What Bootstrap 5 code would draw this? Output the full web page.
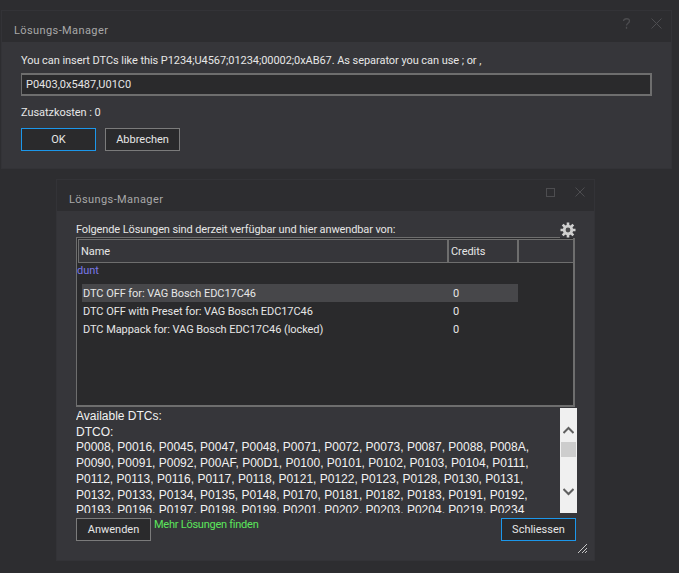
<!DOCTYPE html>
<html lang="de"><head><meta charset="utf-8"><title>Lösungs-Manager</title>
<link rel="stylesheet" href="https://cdn.jsdelivr.net/npm/bootstrap@5.3.0/dist/css/bootstrap.min.css">
<style>
html,body{height:100%}
body{background:#2d2d30;color:#e6e6e6;font:11px/16px Roboto,"Open Sans",sans-serif;letter-spacing:-.06px;overflow:hidden;margin:0}
.win{position:absolute;background:#36363a;outline:1px solid #333337}
.win-a{left:2px;top:11px;width:669px;height:157px}
.win-b{left:57px;top:180px;width:537px;height:380px}
.titlebar{height:31px;background:#2d2d30;color:#a8a8a8;letter-spacing:.4px;padding:12px 12px 0;position:relative}
.winctl{color:#4d4d50;position:absolute}
.ctl-q{left:620px;top:7px}
.ctl-xa{left:649px;top:7px}
.ctl-s{left:489px;top:8px}
.ctl-xb{left:518px;top:7px}
.body-a{padding:11px 19px 0}
.note{line-height:16px}
.inp.form-control{background:#2a2a2c;border:1px solid #6e6e6e;border-width:2px 2px 2px 1px;border-radius:0;color:#e6e6e6;font-size:11px;line-height:16px;height:23px;padding:1px 4px;margin-top:4px;box-shadow:none}
.cost{margin-top:9px;margin-bottom:7px}
.btnrow{gap:9px}
.wbtn.btn{width:75px;height:23px;padding:0;border-radius:0;border:1px solid #7b7b7b;background:#2a2a2c;color:#e6e6e6;font-size:11px;line-height:22px}
.wbtn.on{border-color:#1c97ea}
.body-b{padding:10px 19px 0;position:relative;height:349px}
.lbl{line-height:18px;height:16px;letter-spacing:-.12px}
.gear{position:absolute;left:503px;top:11px;background:#36363a}
.grid-box{height:170px;border:1px solid #6e6e6e;border-width:1px 2px 2px 1px;background:#2a2a2c;padding-top:1px}
.gh{height:24px;border:1px solid #6e6e6e;border-width:1px 0 1px 1px;background:#36363a;margin-left:1px}
.gh>div{padding:4px 2px 0 2px;line-height:16px}
.c1{width:368px}.c2{width:70px;border-left:2px solid #6e6e6e}.c3{flex:1;border-left:2px solid #6e6e6e}
.dunt{color:#7a78e8;line-height:15px;height:21px}
.rowx{height:18px;margin-left:5px;width:436px;line-height:19px;padding-left:1px}
.rowx.sel{background:#47474a}
.rowx .nm{width:370px}
.rtf{height:105px;margin-top:1px;padding-top:1px;overflow:hidden;font:12px/15.7px "Liberation Sans",Arial,sans-serif;letter-spacing:0;color:#f2f2f2;white-space:nowrap}
.sbar{width:17px;height:105px;margin:1px -2px 0 0;background:#f0f0f0;position:relative;flex:none}
.thumb{position:absolute;left:1px;right:1px;top:34px;height:15px;background:#cdcdcd}
.sbar svg{position:absolute;left:3px}
.more{color:#5ce65c;line-height:16px;margin:-1px 0 0 3px;letter-spacing:-.25px}
.foot{margin-top:5px;align-items:flex-start}
.btn-close-b{margin-right:-1px}
.grip{position:absolute;right:7px;bottom:7px}
</style></head><body>
<div class="win win-a">
 <div class="titlebar">
  <span>Lösungs-Manager</span>
  <svg class="winctl ctl-q" width="9" height="11" viewBox="0 0 9 11" fill="none" stroke="currentColor" stroke-width="1.300"><path d="M1.500 3c0-3 6-3 6 0 0 2.200-3 2.200-3 4.500M4.500 8.800v2"/></svg>
  <svg class="winctl ctl-xa" width="11" height="11" viewBox="0 0 11 11" fill="none" stroke="currentColor"><path d="M.5.500l10 10M10.500.500l-10 10"/></svg>
 </div>
 <div class="body-a">
  <div class="note">You can insert DTCs like this P1234;U4567;01234;00002;0xAB67. As separator you can use ; or ,</div>
  <input class="form-control inp" type="text" value="P0403,0x5487,U01C0">
  <div class="cost">Zusatzkosten : 0</div>
  <div class="d-flex btnrow"><button class="btn wbtn on" type="button">OK</button><button class="btn wbtn" type="button">Abbrechen</button></div>
 </div>
</div>
<div class="win win-b">
 <div class="titlebar">
  <span>Lösungs-Manager</span>
  <svg class="winctl ctl-s" width="9" height="9" viewBox="0 0 9 9" fill="none" stroke="currentColor"><rect x=".5" y=".5" width="8" height="8"/></svg>
  <svg class="winctl ctl-xb" width="10" height="10" viewBox="0 0 10 10" fill="none" stroke="currentColor"><path d="M.5.500l9 9M9.500.500l-9 9"/></svg>
 </div>
 <div class="body-b">
  <div class="lbl">Folgende Lösungen sind derzeit verfügbar und hier anwendbar von:</div>
  <svg class="gear" width="16" height="16" viewBox="0 0 16 16"><circle cx="8" cy="8" r="5.200" fill="#d0d0d0"/><g stroke="#d0d0d0" stroke-width="2.600"><path d="M8 .5v15M.5 8h15M2.700 2.700l10.600 10.600M13.300 2.700L2.700 13.300"/></g><circle cx="8" cy="8" r="2.400" fill="#4a4a4c"/></svg>
  <div class="grid-box">
   <div class="gh d-flex"><div class="c1">Name</div><div class="c2">Credits</div><div class="c3"></div></div>
   <div class="dunt">dunt</div>
   <div class="rowx sel d-flex"><div class="nm">DTC OFF for: VAG Bosch EDC17C46</div><div>0</div></div>
   <div class="rowx d-flex"><div class="nm">DTC OFF with Preset for: VAG Bosch EDC17C46</div><div>0</div></div>
   <div class="rowx d-flex"><div class="nm">DTC Mappack for: VAG Bosch EDC17C46 (locked)</div><div>0</div></div>
  </div>
  <div class="d-flex">
   <div class="rtf flex-grow-1">Available DTCs:<br>DTCO:<br>P0008, P0016, P0045, P0047, P0048, P0071, P0072, P0073, P0087, P0088, P008A,<br>P0090, P0091, P0092, P00AF, P00D1, P0100, P0101, P0102, P0103, P0104, P0111,<br>P0112, P0113, P0116, P0117, P0118, P0121, P0122, P0123, P0128, P0130, P0131,<br>P0132, P0133, P0134, P0135, P0148, P0170, P0181, P0182, P0183, P0191, P0192,<br>P0193, P0196, P0197, P0198, P0199, P0201, P0202, P0203, P0204, P0219, P0234</div>
   <div class="sbar"><svg style="top:18px" width="11" height="8" viewBox="0 0 11 8" fill="none" stroke="#606060" stroke-width="2"><path d="M.5 7l5-5 5 5"/></svg><div class="thumb"></div><svg style="top:80px" width="11" height="8" viewBox="0 0 11 8" fill="none" stroke="#606060" stroke-width="2"><path d="M.5 1l5 5 5-5"/></svg></div>
  </div>
  <div class="d-flex foot"><button class="btn wbtn" type="button">Anwenden</button><span class="more">Mehr Lösungen finden</span><button class="btn wbtn on ms-auto btn-close-b" type="button">Schliessen</button></div>
  <svg class="grip" width="9" height="9" viewBox="0 0 9 9" stroke="#c8c8c8" fill="none"><path d="M0 9l9-9M4 9l5-5M7 9l2-2"/></svg>
 </div>
</div>
<script src="https://cdn.jsdelivr.net/npm/bootstrap@5.3.0/dist/js/bootstrap.bundle.min.js"></script>
</body></html>
